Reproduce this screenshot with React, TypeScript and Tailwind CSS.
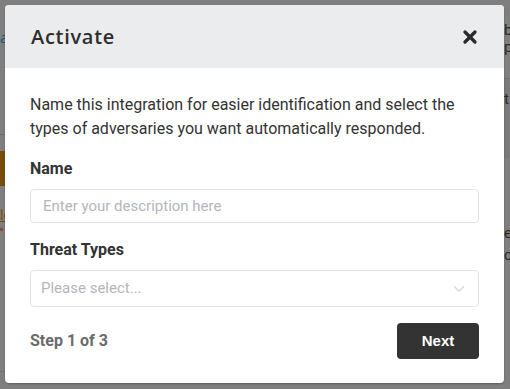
import { ChevronDown, X } from "lucide-react";

const roboto = { fontFamily: "Roboto, 'Liberation Sans', sans-serif" };

function Backdrop() {
  return (
    <div className="flex h-[389px] w-[510px] bg-[#7f7f7f]">
      {/* left edge of the page behind */}
      <div className="flex w-[5px] flex-col overflow-hidden">
        <div className="mt-[30px] h-[14px] whitespace-nowrap text-[15px] leading-[14px] text-[#0d5f66]">
          al
        </div>
        <div className="mt-[90px] h-px bg-[#6f6f6f]" />
        <div className="mt-[16px] h-[35px] bg-[#7d4a05]" />
        <div className="mt-[22px] whitespace-nowrap text-[14px] leading-[14px] text-[#7d4a05] underline">
          le
        </div>
        <div className="mt-[6px] h-[3px] w-[3px] bg-[#8a4a40]" />
        <div className="mt-[140px] h-px bg-[#707070]" />
      </div>
      <div className="flex-1" />
      {/* right edge of the page behind */}
      <div className="flex w-[6px] flex-col overflow-hidden text-[15px] text-[#2a2a2a]" style={roboto}>
        <div className="mt-[22px] leading-[17px]">b</div>
        <div className="leading-[17px]">p</div>
        <div className="mt-[22px] h-[80px] border-t border-[#727272] bg-[#7a7a7a] pt-[12px] leading-[17px]">
          t
        </div>
        <div className="mt-[64px] leading-[22px]">e</div>
        <div className="leading-[22px]">c</div>
      </div>
    </div>
  );
}

export default function App() {
  return (
    <div className="relative h-[389px] w-[510px] overflow-hidden">
      <Backdrop />

      <div className="absolute left-[5px] top-[5px] flex h-[378px] w-[499px] flex-col overflow-hidden rounded-[4px] bg-white shadow-[0_1px_2px_rgba(0,0,0,0.25)]">
        <div className="flex h-[63px] items-center justify-between bg-[#ebeced] px-[26px]">
          <h2
            className="text-[20px] font-semibold tracking-[0.7px] text-[#2e2e2e]"
            style={{ fontFamily: "'Open Sans', 'Liberation Sans', sans-serif" }}
          >
            Activate
          </h2>
          <X size={20} strokeWidth={4} className="mr-[-2px] text-[#2b2b2b]" />
        </div>

        <div className="flex flex-1 flex-col px-[25px] pt-[25px]" style={roboto}>
          <p className="text-[16px] leading-[24px] text-[#333333]">
            Name this integration for easier identification and select the types of adversaries you want automatically responded.
          </p>

          <label className="mt-[18px] text-[16px] font-bold leading-[20px] text-[#333333]">Name</label>
          <div className="mt-[10px] flex h-[34px] items-center rounded-[4px] border border-[#e2e3e5] px-[12px] text-[15px] text-[#b3b6bd]">
            Enter your description here
          </div>

          <label className="mt-[17px] text-[16px] font-bold leading-[20px] text-[#333333]">Threat Types</label>
          <div className="mt-[10px] flex h-[37px] items-center justify-between rounded-[4px] border border-[#e2e3e5] pl-[10px] pr-[10px] text-[15px] text-[#b3b6bd]">
            <span>Please select...</span>
            <ChevronDown size={18} strokeWidth={1.5} className="text-[#d4d6d9]" />
          </div>

          <div className="mt-[16px] flex items-center justify-between">
            <span className="text-[16px] font-bold text-[#6b6b6b]">Step 1 of 3</span>
            <button
              className="h-[36px] w-[82px] rounded-[4px] bg-[#333333] text-[15px] font-bold text-white"
              style={{ fontFamily: "'Liberation Sans', Arial, sans-serif" }}
            >
              Next
            </button>
          </div>
        </div>
      </div>
    </div>
  );
}
